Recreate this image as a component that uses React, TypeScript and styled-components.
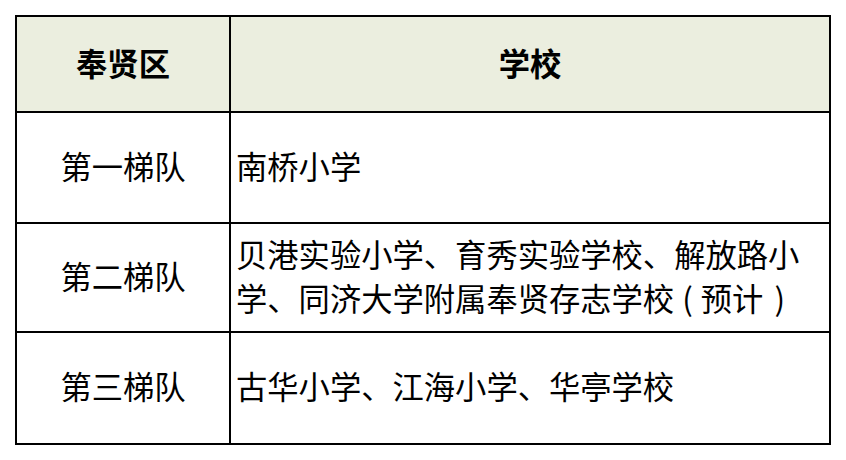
import { Fragment, ReactNode } from 'react';
import styled, { createGlobalStyle } from 'styled-components';

const GlobalStyle = createGlobalStyle`
    html, body {
        margin: 0;
        padding: 0;
        background: #ffffff;
    }
    body {
        font-family: "Noto Sans CJK SC", "Microsoft YaHei", sans-serif;
        color: #000000;
    }
`;

const Page = styled.div`
    padding: 15px 0 0 15px;
`;

const Table = styled.div`
    display: grid;
    grid-template-columns: 212px 598px;
    grid-template-rows: 94px 109px 107px 110px;
    gap: 2px;
    padding: 2px;
    width: 816px;
    box-sizing: border-box;
    background: #000000;
`;

const Cell = styled.div<{ $head?: boolean; $align?: 'center' | 'left' }>`
    display: flex;
    align-items: center;
    justify-content: ${(p) => (p.$align === 'left' ? 'flex-start' : 'center')};
    padding-left: ${(p) => (p.$align === 'left' ? '5px' : '0')};
    padding-right: ${(p) => (p.$align === 'left' ? '4px' : '0')};
    padding-bottom: ${(p) => (p.$head ? '2px' : '4px')};
    background: ${(p) => (p.$head ? '#ebeedf' : '#ffffff')};
    font-size: 31.3px;
    font-weight: ${(p) => (p.$head ? 700 : 400)};
    line-height: 44px;
    box-sizing: border-box;
`;

const CellText = styled.span``;

// brackets sit centred in a wide box, as in the source table
const Paren = styled.span<{ $space: number }>`
    margin: 0 ${(p) => p.$space}px;
`;

const rows: { tier: string; schools: ReactNode }[] = [
    { tier: '第一梯队', schools: '南桥小学' },
    {
        tier: '第二梯队',
        schools: (
            <>
                贝港实验小学、育秀实验学校、解放路小学、同济大学附属奉贤存志学校
                <Paren $space={8}>(</Paren>预计<Paren $space={11}>)</Paren>
            </>
        ),
    },
    { tier: '第三梯队', schools: '古华小学、江海小学、华亭学校' },
];

export default function App() {
    return (
        <Page>
            <GlobalStyle />
            <Table>
                <Cell $head>奉贤区</Cell>
                <Cell $head>学校</Cell>
                {rows.map((row) => (
                    <Fragment key={row.tier}>
                        <Cell>{row.tier}</Cell>
                        <Cell $align="left">
                            <CellText>{row.schools}</CellText>
                        </Cell>
                    </Fragment>
                ))}
            </Table>
        </Page>
    );
}
